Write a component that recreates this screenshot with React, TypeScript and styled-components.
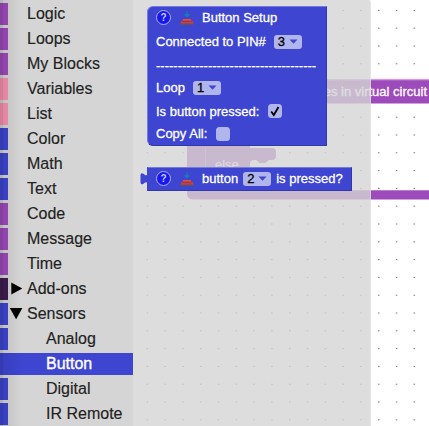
import React from 'react';
import styled, { createGlobalStyle } from 'styled-components';

const GlobalStyle = createGlobalStyle`
  * { box-sizing: border-box; }
  body { margin: 0; overflow: hidden; background: #fff; font-family: "Liberation Sans", Arial, sans-serif; }
`;

const BLUE = '#3d45d1';
const PURPLE = '#9d4abb';

const Editor = styled.main`
  position: relative;
  display: flex;
  width: 429px;
  height: 426px;
  overflow: hidden;
`;

const Workspace = styled.svg`
  position: absolute;
  inset: 0;
`;

const Toolbox = styled.nav`
  position: relative;
  width: 133px;
  height: 426px;
  padding-top: 3px;
  background: #d5d5d5;
  overflow: hidden;

  &::after {
    content: '';
    position: absolute;
    inset: 0 auto 0 0;
    width: 22px;
    pointer-events: none;
    background: linear-gradient(90deg, rgba(0, 0, 0, 0.15) 0 3px, rgba(0, 0, 0, 0.09) 3px, transparent 22px);
  }
`;

const Category = styled.div<{ $color: string; $nested?: boolean; $selected?: boolean }>`
  display: flex;
  align-items: center;
  height: 22px;
  margin-bottom: 3px;
  border-left: 8px solid ${(p) => p.$color};
  background: ${(p) => (p.$selected ? p.$color : 'transparent')};
  color: ${(p) => (p.$selected ? '#fff' : '#222')};
  padding-left: ${(p) => (p.$nested ? 38 : 0)}px;
  font-size: 16px;
  line-height: 22px;
  white-space: nowrap;
  -webkit-text-stroke: ${(p) => (p.$selected ? '0.35px #fff' : '0.15px #222')};
`;

const Disclosure = styled.span`
  flex: none;
  width: 19px;
  height: 22px;

  svg { display: block; }
`;

const Flyout = styled.section`
  position: relative;
  width: 238px;
  height: 450px;
  margin-top: -4px;
  padding: 10px 0 0 14px;
  border-radius: 0 8px 8px 0;
  background: rgba(213, 213, 213, 0.8);
  box-shadow: inset -1px 0 rgba(255, 255, 255, 0.25);
`;

const SetupBlock = styled.div`
  width: 180px;
  height: 140px;
  padding: 0 8px;
  border-radius: 6px 0 0 6px;
  background: ${BLUE};
  border: 1px solid;
  border-color: #747be0 #3138a8 #3138a8 #747be0;
`;

const Line = styled.div<{ $height: number }>`
  display: flex;
  align-items: center;
  height: ${(p) => p.$height}px;
  color: #fff;
  font-size: 13px;
  line-height: 15px;
  white-space: pre;
  -webkit-text-stroke: 0.3px #fff;
`;

const PressedBlock = styled.div`
  position: relative;
  width: 205px;
  height: 24px;
  margin-top: 21px;
  padding: 0 8px;
  background: ${BLUE};
  border: 1px solid;
  border-color: #747be0 #3138a8 #3138a8 ${BLUE};
`;

const OutputTab = styled.svg`
  position: absolute;
  left: -8px;
  top: 3px;
`;

const Help = styled.span`
  display: grid;
  place-items: center;
  flex: none;
  width: 15px;
  height: 15px;
  margin-right: 9px;
  border: 1px solid #aeb2ec;
  border-radius: 50%;
  background: #1717ee;
  color: #c8cbf5;
  font-size: 10px;
  font-weight: bold;
  line-height: 13px;
  -webkit-text-stroke: 0;
`;

const PushIcon = styled.svg`
  flex: none;
  margin-right: 8px;
`;

const Dropdown = styled.span<{ $gap: number }>`
  display: flex;
  align-items: center;
  justify-content: space-between;
  flex: none;
  width: 28px;
  height: 14px;
  margin-left: ${(p) => p.$gap}px;
  padding: 0 4px 0 4px;
  border-radius: 3px;
  background: #b1b5ed;
  color: #000;
  -webkit-text-stroke: 0.3px #000;

  & + span { margin-left: 5px; }
`;

const Checkbox = styled.span`
  display: block;
  flex: none;
  width: 14px;
  height: 14px;
  margin-left: 9px;
  border-radius: 3.5px;
  background: #b1b5ed;

  svg { display: block; }
`;

type CategoryItem = { name: string; color: string; arrow?: 'right' | 'down'; nested?: boolean; selected?: boolean };

const categories: CategoryItem[] = [
  { name: 'Logic', color: PURPLE },
  { name: 'Loops', color: PURPLE },
  { name: 'My Blocks', color: PURPLE },
  { name: 'Variables', color: '#f792b2' },
  { name: 'List', color: '#f792b2' },
  { name: 'Color', color: BLUE },
  { name: 'Math', color: BLUE },
  { name: 'Text', color: BLUE },
  { name: 'Code', color: PURPLE },
  { name: 'Message', color: PURPLE },
  { name: 'Time', color: PURPLE },
  { name: 'Add-ons', color: '#3c1d50', arrow: 'right' },
  { name: 'Sensors', color: BLUE, arrow: 'down' },
  { name: 'Analog', color: BLUE, nested: true },
  { name: 'Button', color: BLUE, nested: true, selected: true },
  { name: 'Digital', color: BLUE, nested: true },
  { name: 'IR Remote', color: BLUE, nested: true },
];

const PushButtonIcon = () => (
  <PushIcon width="14" height="14" viewBox="0 0 14 14">
    <path d="M7 0.5V5M4.6 3.2L7 5.6L9.4 3.2" fill="none" stroke="#167fb2" strokeWidth="1.4" />
    <path d="M3 8H11L11.6 10.4H2.4Z" fill="#e04a42" />
    <path d="M1.2 10H12.8L13.7 13H0.3Z" fill="#bf4148" />
    <path d="M2.4 10.2H11.6" stroke="#5b2549" strokeWidth="0.5" />
    <path d="M0.2 12.6H13.8V14H0.2Z" fill="#59536a" />
  </PushIcon>
);

const Select = ({ value, gap = 8 }: { value: string; gap?: number }) => (
  <Dropdown $gap={gap}>
    {value}
    <svg width="9" height="5" viewBox="0 0 9 5"><path d="M0.5 0.5H8.5L4.5 4.8Z" fill={BLUE} /></svg>
  </Dropdown>
);

const GRID = 17.8;

const CircuitCanvas = () => (
  <Workspace width="429" height="426">
    <g fill="#777">
      {Array.from({ length: 24 }, (_, row) =>
        Array.from({ length: 17 }, (_, col) => (
          <rect key={`${row}-${col}`} x={128.8 + col * GRID} y={9.9 + row * GRID} width="1.5" height="1" />
        )),
      )}
    </g>
    <path d="M187 79.5H429V103.5H205V148H272Q276 148 276 152V156Q276 160 272 160H269L265 163H260L256 160H254Q250 160 250 164V190H429V199.5H193Q187 199.5 187 193Z" fill={PURPLE} />
    <path d="M205 103H250V190H205Z" fill={PURPLE} />
    <path d="M187 80H429M205.5 148V190M250 190.5H429" stroke="#b87bce" fill="none" />
    <path d="M370 79H429" stroke="#dfc6e8" strokeWidth="0.6" />
    <text x="427" y="96" textAnchor="end" fill="#fff" stroke="#fff" strokeWidth="0.3" fontFamily="Liberation Sans, Arial, sans-serif" fontSize="13">es in virtual circuit</text>
    <text x="215" y="169" fill="#fff" fontFamily="Liberation Sans, Arial, sans-serif" fontSize="13">else</text>
  </Workspace>
);

export default function App() {
  return (
    <>
      <GlobalStyle />
      <Editor>
        <CircuitCanvas />
        <Toolbox>
          {categories.map((item) => (
            <Category key={item.name} $color={item.color} $nested={item.nested} $selected={item.selected}>
              {!item.nested && (
                <Disclosure>
                  {item.arrow && (
                    <svg width="19" height="22" viewBox="0 0 19 22">
                      <path d={item.arrow === 'right' ? 'M3.3 4.5L14.3 10.5L3.3 16.5Z' : 'M1.8 5H14.4L8.1 16.2Z'} fill="#000" />
                    </svg>
                  )}
                </Disclosure>
              )}
              {item.name}
            </Category>
          ))}
        </Toolbox>
        <Flyout>
          <SetupBlock>
            <Line $height={21}><Help>?</Help><PushButtonIcon />Button Setup</Line>
            <Line $height={27}>Connected to PIN#<Select value="3" /></Line>
            <Line $height={20}>{'-'.repeat(37)}</Line>
            <Line $height={25}>Loop<Select value="1" /></Line>
            <Line $height={22}>
              Is button pressed:
              <Checkbox>
                <svg width="14" height="14" viewBox="0 0 14 14"><path d="M3.2 7.5L5.8 11L10.5 3" fill="none" stroke="#000" strokeWidth="1.8" /></svg>
              </Checkbox>
            </Line>
            <Line $height={23}>Copy All:<Checkbox /></Line>
          </SetupBlock>
          <PressedBlock>
            <OutputTab width="8" height="16" viewBox="0 0 8 16">
              <path d="M8 3Q6.5 5 5 4L3.5 2.8Q0.8 1.2 0.5 4V11.5Q0.8 14.3 3.5 12.7L5 11.5Q6.8 10.3 8 13Z" fill={BLUE} />
            </OutputTab>
            <Line $height={21}><Help>?</Help><PushButtonIcon />button<Select value="2" gap={5} /><span>is pressed?</span></Line>
          </PressedBlock>
        </Flyout>
      </Editor>
    </>
  );
}
